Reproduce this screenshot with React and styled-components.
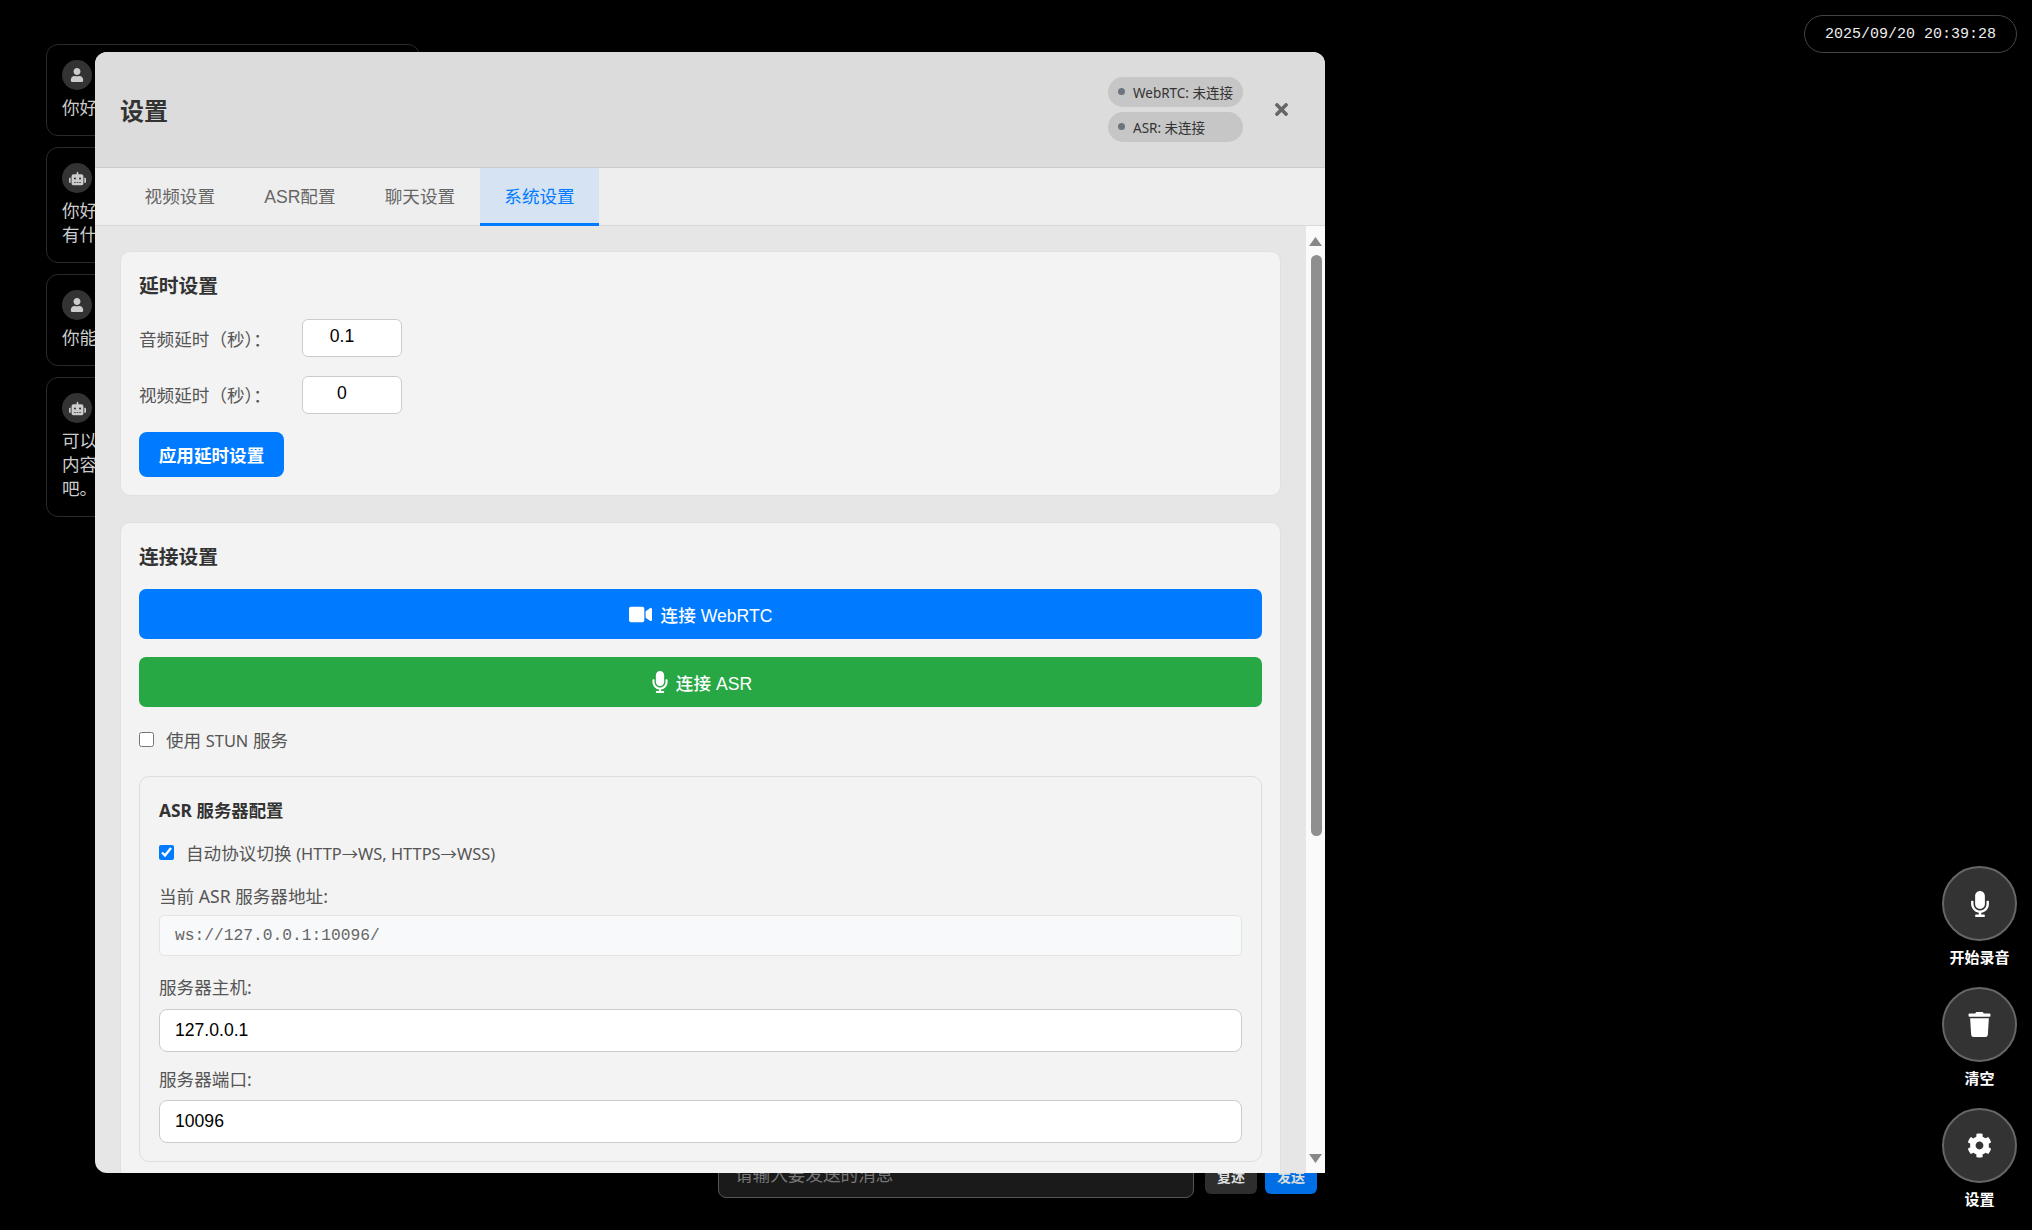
import React from "react"
import styled, { createGlobalStyle } from "styled-components"
import { FaUser, FaRobot, FaTimes, FaVideo, FaMicrophone, FaTrash, FaCog } from "react-icons/fa"

const arial = `"Liberation Sans", "Noto Sans CJK SC", sans-serif`
const soft = `"Noto Sans", "Noto Sans CJK SC", sans-serif`

const messages = [
  { role: "user", text: "你好" },
  { role: "bot", text: "你好！我是你的智能语音助手，\n有什么可以帮助你的吗？" },
  { role: "user", text: "你能做些什么呢" },
  { role: "bot", text: "可以的，我能回答问题、陪你聊天，\n内容也可以帮你整理，直接告诉我\n吧。" },
]

const tabs = ["视频设置", "ASR配置", "聊天设置", "系统设置"]

export default function App() {
  return (
    <>
      <GlobalStyle />
      <Page>
        <ChatColumn>
          {messages.map((m, i) => (
            <Bubble key={i}>
              <Avatar>{m.role === "user" ? <FaUser size={14} /> : <FaRobot size={17} />}</Avatar>
              <BubbleText>{m.text}</BubbleText>
            </Bubble>
          ))}
        </ChatColumn>

        <CenterColumn>
          <Composer>
            <MessageInput placeholder="请输入要发送的消息" />
            <ComposerButton $bg="#2e2e2e">复述</ComposerButton>
            <ComposerButton $bg="#006fe6">发送</ComposerButton>
          </Composer>
        </CenterColumn>

        <RightColumn>
          <Clock>2025/09/20 20:39:28</Clock>
          <Tools>
            <Tool>
              <ToolCircle><FaMicrophone size={26} /></ToolCircle>
              <ToolLabel>开始录音</ToolLabel>
            </Tool>
            <Tool>
              <ToolCircle><FaTrash size={25} /></ToolCircle>
              <ToolLabel>清空</ToolLabel>
            </Tool>
            <Tool>
              <ToolCircle><FaCog size={25} /></ToolCircle>
              <ToolLabel>设置</ToolLabel>
            </Tool>
          </Tools>
        </RightColumn>

        <Modal>
          <ModalHeader>
            <ModalTitle>设置</ModalTitle>
            <StatusList>
              <StatusPill><StatusDot />WebRTC: 未连接</StatusPill>
              <StatusPill><StatusDot />ASR: 未连接</StatusPill>
            </StatusList>
            <CloseButton><FaTimes size={19} /></CloseButton>
          </ModalHeader>

          <TabBar>
            {tabs.map((t, i) => (
              <Tab key={t} $active={i === 3}>{t}</Tab>
            ))}
          </TabBar>

          <ModalBody>
            <Scroller>
              <Section>
                <SectionTitle $gap={17}>延时设置</SectionTitle>
                <DelayRow>
                  <DelayLabel>音频延时（秒）：</DelayLabel>
                  <DelayInput defaultValue="0.1" />
                </DelayRow>
                <DelayRow>
                  <DelayLabel>视频延时（秒）：</DelayLabel>
                  <DelayInput defaultValue="0" />
                </DelayRow>
                <ApplyButton>应用延时设置</ApplyButton>
              </Section>

              <Section>
                <SectionTitle $gap={16}>连接设置</SectionTitle>
                <WideButton $bg="#007bff" $gap={9}><FaVideo size={23} />连接 WebRTC</WideButton>
                <WideButton $bg="#28a745" $gap={5}><FaMicrophone size={22} />连接 ASR</WideButton>
                <CheckRow>
                  <input type="checkbox" />
                  <span>使用 <Latin>STUN</Latin> 服务</span>
                </CheckRow>

                <SubCard>
                  <SubTitle>ASR 服务器配置</SubTitle>
                  <CheckRow $tight>
                    <input type="checkbox" defaultChecked />
                    <span>自动协议切换 <Latin>(HTTP→WS, HTTPS→WSS)</Latin></span>
                  </CheckRow>
                  <FieldLabel $gap={8}>当前 ASR 服务器地址:</FieldLabel>
                  <AddressBox>ws://127.0.0.1:10096/</AddressBox>
                  <FieldLabel $gap={11}>服务器主机:</FieldLabel>
                  <TextField defaultValue="127.0.0.1" />
                  <FieldLabel $gap={10}>服务器端口:</FieldLabel>
                  <TextField defaultValue="10096" $last />
                </SubCard>
              </Section>
            </Scroller>

            <Scrollbar>
              <Arrow viewBox="0 0 13 9"><path d="M6.5 0 13 9H0z" /></Arrow>
              <ThumbTrack><Thumb /></ThumbTrack>
              <Arrow viewBox="0 0 13 9"><path d="M0 0h13L6.5 9z" /></Arrow>
            </Scrollbar>
          </ModalBody>
        </Modal>
      </Page>
    </>
  )
}

const GlobalStyle = createGlobalStyle`
  html, body { margin: 0; padding: 0; background: #000; }
  * { box-sizing: border-box; }
  body { font-family: ${arial}; overflow: hidden; }
`

const Page = styled.div`
  position: relative;
  width: 2032px;
  height: 1230px;
  background: #000;
  display: flex;
  overflow: hidden;
`

const ChatColumn = styled.div`
  width: 420px;
  padding: 44px 0 0 46px;
  display: flex;
  flex-direction: column;
  gap: 11px;
`

const Bubble = styled.div`
  border: 1px solid #2a2a2a;
  border-radius: 12px;
  padding: 15px;
`

const Avatar = styled.div`
  width: 30px;
  height: 30px;
  border-radius: 50%;
  background: #333;
  color: #ccc;
  display: flex;
  align-items: center;
  justify-content: center;
  margin-bottom: 6px;
`

const BubbleText = styled.div`
  color: #ccc;
  font-size: 17.6px;
  line-height: 24px;
  white-space: pre-line;
`

const CenterColumn = styled.div`
  width: 897px;
  padding: 0 0 32px 298px;
  display: flex;
  flex-direction: column;
  justify-content: flex-end;
`

const Composer = styled.div`
  display: flex;
  align-items: center;
  gap: 8px;
`

const MessageInput = styled.input`
  flex: 1;
  min-width: 0;
  height: 40px;
  margin-right: 3px;
  padding: 0 16px 5px;
  font: 17.6px ${arial};
  color: #eee;
  background: #1a1a1a;
  border: 1px solid #555;
  border-radius: 8px;
  &::placeholder { color: #777; }
`

const ComposerButton = styled.button`
  width: 52px;
  height: 32px;
  border: 0;
  border-radius: 6px;
  padding: 0 0 5px;
  font: bold 14px ${arial};
  color: #ddd;
  background: ${p => p.$bg};
`

const RightColumn = styled.div`
  flex: 1;
  padding: 15px 15px 20px 0;
  display: flex;
  flex-direction: column;
  justify-content: space-between;
  align-items: flex-end;
`

const Clock = styled.div`
  width: 213px;
  height: 38px;
  border: 1px solid #444;
  border-radius: 19px;
  display: flex;
  align-items: center;
  justify-content: center;
  font: 15px "Liberation Mono", monospace;
  color: #eee;
`

const Tools = styled.div`
  width: 75px;
  display: flex;
  flex-direction: column;
  gap: 19px;
`

const Tool = styled.div`
  display: flex;
  flex-direction: column;
  align-items: center;
`

const ToolCircle = styled.div`
  width: 75px;
  height: 75px;
  border-radius: 50%;
  background: #333;
  border: 2px solid #666;
  color: #fff;
  display: flex;
  align-items: center;
  justify-content: center;
`

const ToolLabel = styled.div`
  margin-top: 7px;
  font-size: 15px;
  font-weight: bold;
  line-height: 20px;
  color: #fff;
  white-space: nowrap;
`

const Modal = styled.div`
  position: absolute;
  left: 95px;
  top: 52px;
  width: 1230px;
  height: 1121px;
  border-radius: 12px 12px 0 12px;
  overflow: hidden;
  background: #e6e6e6;
  display: flex;
  flex-direction: column;
`

const ModalHeader = styled.div`
  flex: none;
  height: 116px;
  padding: 0 31px 1px 25px;
  background: #dcdcdc;
  border-bottom: 1px solid #ccc;
  display: flex;
  align-items: center;
`

const ModalTitle = styled.h2`
  margin: 6px auto 0 0;
  font-size: 24px;
  line-height: 32px;
  font-weight: bold;
  color: #333;
`

const StatusList = styled.div`
  display: flex;
  flex-direction: column;
  gap: 5px;
  margin-right: 25px;
`

const StatusPill = styled.div`
  height: 30px;
  padding: 0 10px;
  border-radius: 15px;
  background: #c6c6c6;
  display: flex;
  align-items: center;
  gap: 8px;
  font: 13.5px ${soft};
  color: #333;
`

const StatusDot = styled.i`
  width: 7px;
  height: 7px;
  border-radius: 50%;
  background: #6c757d;
`

const CloseButton = styled.button`
  width: 26px;
  height: 26px;
  padding: 0;
  border: 0;
  background: none;
  color: #666;
  display: flex;
  align-items: center;
  justify-content: center;
`

const TabBar = styled.div`
  flex: none;
  height: 58px;
  padding: 0 25px;
  background: #eee;
  border-bottom: 1px solid #d9d9d9;
  display: flex;
`

const Tab = styled.div`
  padding: 0 24.6px;
  display: flex;
  align-items: center;
  font-size: 17.6px;
  color: ${p => (p.$active ? "#007bff" : "#666")};
  background: ${p => (p.$active ? "#d5e3f2" : "transparent")};
  border-bottom: 3px solid ${p => (p.$active ? "#007bff" : "transparent")};
  margin-bottom: -1px;
`

const ModalBody = styled.div`
  flex: 1;
  min-height: 0;
  display: flex;
`

const Scroller = styled.div`
  flex: 1;
  min-width: 0;
  padding: 25px 25px 0;
  overflow: hidden;
`

const Section = styled.section`
  background: #f3f3f3;
  border: 1px solid #e0e0e0;
  border-radius: 10px;
  padding: 18px 18px 18px;
  margin-bottom: 26px;
`

const SectionTitle = styled.h3`
  margin: 0 0 ${p => p.$gap}px;
  font-size: 19.8px;
  line-height: 32px;
  font-weight: bold;
  color: #333;
`

const DelayRow = styled.div`
  height: 38px;
  margin-bottom: 18.7px;
  display: flex;
  align-items: center;
`

const DelayLabel = styled.label`
  width: 163px;
  font-size: 17.6px;
  color: #555;
`

const DelayInput = styled.input`
  width: 100px;
  height: 38px;
  padding: 0 20px 3px 0;
  text-align: center;
  font: 17.6px ${arial};
  color: #000;
  background: #fff;
  border: 1px solid #ccc;
  border-radius: 6px;
`

const ApplyButton = styled.button`
  display: block;
  width: 145px;
  height: 45px;
  padding: 0;
  border: 0;
  border-radius: 8px;
  background: #007bff;
  color: #fff;
  font: bold 17.6px ${arial};
`

const WideButton = styled.button`
  width: 100%;
  height: 50px;
  margin-bottom: 18px;
  padding: 0;
  border: 0;
  border-radius: 7px;
  background: ${p => p.$bg};
  color: #fff;
  font: 500 17.6px ${arial};
  display: flex;
  align-items: center;
  justify-content: center;
  gap: ${p => p.$gap}px;
`

const CheckRow = styled.label`
  display: flex;
  align-items: center;
  height: 24px;
  margin: ${p => (p.$tight ? "0 0 21px" : "20px 0 25px")};
  font: 17.6px ${soft};
  color: #555;
  input {
    width: 15px;
    height: 15px;
    margin: 0 12px 0 0;
    accent-color: #007bff;
  }
`

const Latin = styled.span`
  font-size: 16.4px;
`

const SubCard = styled.div`
  border: 1px solid #dedede;
  border-radius: 10px;
  padding: 21px 19px 18px;
`

const SubTitle = styled.h4`
  margin: 0 0 18px;
  font: bold 17.4px/24px ${soft};
  color: #333;
`

const FieldLabel = styled.div`
  height: 22px;
  margin-bottom: ${p => p.$gap}px;
  font: 17.6px/22px ${soft};
  color: #555;
`

const AddressBox = styled.div`
  height: 41px;
  margin-bottom: 20px;
  padding: 0 15px;
  display: flex;
  align-items: center;
  background: #f8f9fa;
  border: 1px solid #e3e3e3;
  border-radius: 5px;
  font: 16.25px "Liberation Mono", monospace;
  color: #666;
`

const TextField = styled.input`
  display: block;
  width: 100%;
  height: 43px;
  margin-bottom: ${p => (p.$last ? 0 : 16)}px;
  padding: 0 15px;
  font: 17.6px ${arial};
  color: #000;
  background: #fff;
  border: 1px solid #ccc;
  border-radius: 8px;
`

const Scrollbar = styled.div`
  flex: none;
  width: 19px;
  padding: 11px 3px 10px;
  background: #fafafa;
  display: flex;
  flex-direction: column;
  align-items: center;
`

const Arrow = styled.svg`
  flex: none;
  width: 13px;
  height: 9px;
  fill: #888;
`

const ThumbTrack = styled.div`
  flex: 1;
  width: 100%;
  padding: 9px 1.5px;
`

const Thumb = styled.div`
  width: 11px;
  height: 581px;
  border-radius: 6px;
  background: #8f8f8f;
`
